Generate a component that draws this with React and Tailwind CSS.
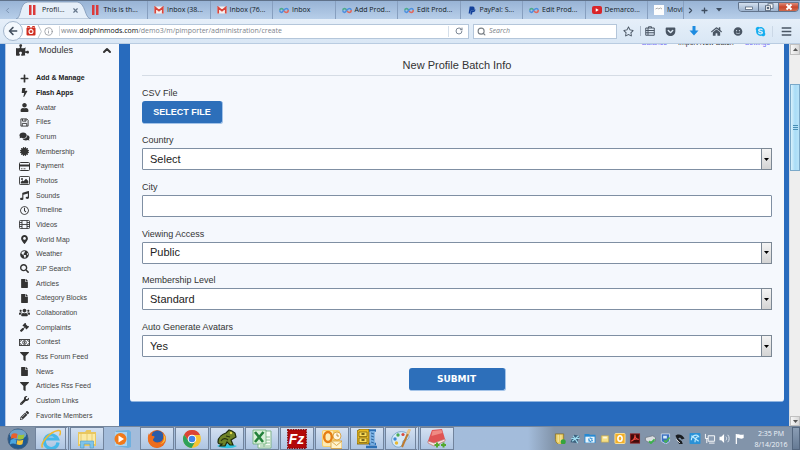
import React, { useState } from "react";
import {
  FaPuzzlePiece, FaPlus, FaBolt, FaUser, FaComments, FaCertificate,
  FaMusic, FaRegClock, FaMapMarkerAlt, FaGlobeAmericas, FaSearch, FaFile,
  FaUsers, FaGavel, FaFilter, FaWrench, FaPencilAlt, FaPaypal, FaSkype,
  FaHome, FaArrowLeft, FaGetPocket, FaRegStar, FaSmile, FaBars,
} from "react-icons/fa";
import { ChevronLeft, ChevronRight, ChevronUp, Info, RotateCw, Search, X } from "lucide-react";

/* ---------- module icons ---------- */

function DiskIcon({ className }) {
  return (
    <svg viewBox="0 0 20 20" className={className} fill="none" stroke="currentColor" strokeWidth="2">
      <path d="M2 2h13l3 3v13H2z" />
      <path d="M5.500 2v5h8V2M5 18v-6h10v6" />
      <path d="M11 3v3" />
    </svg>
  );
}

function CardIcon({ className }) {
  return (
    <svg viewBox="0 0 22 18" className={className}>
      <rect x="1" y="1" width="20" height="16" rx="2" fill="none" stroke="currentColor" strokeWidth="2" />
      <path d="M1 5h20v4H1z" fill="currentColor" />
      <path d="M4 13.500h3M9 13.500h4" stroke="currentColor" strokeWidth="1.600" />
    </svg>
  );
}

function PictureIcon({ className }) {
  return (
    <svg viewBox="0 0 22 18" className={className}>
      <rect x="1" y="1" width="20" height="16" rx="1.500" fill="none" stroke="currentColor" strokeWidth="1.800" />
      <circle cx="6" cy="6" r="2" fill="currentColor" />
      <path d="M3.500 15v-3L7 8.500l2 2L14 5.500l4.500 4.500v5z" fill="currentColor" />
    </svg>
  );
}

function FilmIcon({ className }) {
  return (
    <svg viewBox="0 0 22 18" className={className} fill="none" stroke="currentColor" strokeWidth="1.700">
      <rect x="1" y="1" width="20" height="16" rx="1.500" />
      <path d="M6 1v16M16 1v16M6 9h10M1 5h5M1 9h5M1 13h5M16 5h5M16 9h5M16 13h5" />
    </svg>
  );
}

function MoneyIcon({ className }) {
  return (
    <svg viewBox="0 0 22 16" className={className} fill="none" stroke="currentColor" strokeWidth="1.800">
      <rect x="1" y="2" width="20" height="12" />
      <ellipse cx="11" cy="8" rx="3.500" ry="4" />
      <path d="M11 5.500v5M2 5.500h1.500L5 3M20 5.500h-1.500L17 3M2 10.500h1.500L5 13M20 10.500h-1.500L17 13" />
    </svg>
  );
}

const MODULES = [
  { label: "Add & Manage", icon: FaPlus, bold: true },
  { label: "Flash Apps", icon: FaBolt, bold: true },
  { label: "Avatar", icon: FaUser },
  { label: "Files", icon: DiskIcon },
  { label: "Forum", icon: FaComments },
  { label: "Membership", icon: FaCertificate },
  { label: "Payment", icon: CardIcon },
  { label: "Photos", icon: PictureIcon },
  { label: "Sounds", icon: FaMusic },
  { label: "Timeline", icon: FaRegClock },
  { label: "Videos", icon: FilmIcon },
  { label: "World Map", icon: FaMapMarkerAlt },
  { label: "Weather", icon: FaGlobeAmericas },
  { label: "ZIP Search", icon: FaSearch },
  { label: "Articles", icon: FaFile },
  { label: "Category Blocks", icon: FaFile },
  { label: "Collaboration", icon: FaUsers },
  { label: "Complaints", icon: FaGavel },
  { label: "Contest", icon: MoneyIcon },
  { label: "Rss Forum Feed", icon: FaFilter },
  { label: "News", icon: FaFile },
  { label: "Articles Rss Feed", icon: FaFilter },
  { label: "Custom Links", icon: FaWrench },
  { label: "Favorite Members", icon: FaPencilAlt },
];

/* ---------- favicons ---------- */

function BarsIcon() {
  return (
    <svg viewBox="0 0 10 10" className="h-[10px] w-[10px] shrink-0">
      <rect x="1" y="0" width="2.500" height="10" fill="#dc3a3a" />
      <rect x="5" y="0" width="2.500" height="10" fill="#dc3a3a" />
    </svg>
  );
}

function MailIcon() {
  return (
    <svg viewBox="0 0 20 16" className="h-[8px] w-[10px] shrink-0">
      <rect x="1" y="1" width="18" height="14" rx="1" fill="#f7f0ef" />
      <path d="M2.500 15V3l7.500 6.500L17.500 3v12" fill="none" stroke="#d9453b" strokeWidth="3.400" />
    </svg>
  );
}

function LoopIcon() {
  return (
    <svg viewBox="0 0 20 12" className="h-[7px] w-[10px] shrink-0" fill="none" strokeWidth="3">
      <path d="M10 6C8 3 7 2 5 2a4 4 0 0 0-3.500 4" stroke="#4cab8c" />
      <path d="M1.500 6A4 4 0 0 0 5 10c3 0 5-8 9.500-8A4 4 0 0 1 18.500 5" stroke="#4b8fe0" />
      <path d="M18.500 5c0 3-1.500 5-4 5-2 0-3-1-4-3" stroke="#e2685c" />
    </svg>
  );
}

function PlayIcon() {
  return (
    <svg viewBox="0 0 20 16" className="h-[8px] w-[10px] shrink-0">
      <rect width="20" height="16" rx="4" fill="#d9252a" />
      <path d="M7.500 4.500v7l6-3.500z" fill="#fff" />
    </svg>
  );
}

function PageIcon() {
  return (
    <svg viewBox="0 0 10 10" className="h-[10px] w-[10px] shrink-0">
      <rect width="10" height="10" fill="#fdfdfd" />
      <path d="M1.500 4l2-1 1 1 2-1 1.500 1" stroke="#999" strokeWidth=".8" fill="none" />
    </svg>
  );
}

const TABS = [
  { title: "This is th...", icon: <BarsIcon /> },
  { title: "Inbox (38...", icon: <MailIcon /> },
  { title: "Inbox (76...", icon: <MailIcon /> },
  { title: "Inbox", icon: <LoopIcon /> },
  { title: "Add Prod...", icon: <LoopIcon /> },
  { title: "Edit Prod...", icon: <LoopIcon /> },
  { title: "PayPal: S...", icon: <FaPaypal className="h-[9px] w-[10px] shrink-0 text-[#14419a]" /> },
  { title: "Edit Prod...", icon: <LoopIcon /> },
  { title: "Demarco...", icon: <PlayIcon /> },
];

function TabStrip() {
  return (
    <div className="flex h-[19px] items-stretch border-t border-[#5f7189] bg-linear-to-b from-[#98b3d5] to-[#b7cee9] font-['Open_Sans',sans-serif] text-[7px] text-[#111a26]">
      <button type="button" aria-label="Scroll tabs left" className="flex w-[22px] items-center pl-[3px] text-[#6d84a3]">
        <ChevronLeft className="h-[9px] w-[9px]" />
      </button>
      <div className="grid min-w-0 flex-1 grid-cols-10">
        <div className="relative flex items-center pl-1.5">
          <svg viewBox="0 0 76 18" preserveAspectRatio="none" className="absolute -left-[6px] top-0 h-[18px] w-[75px]">
            <path d="M0 18C6 17 3 2 12 1H62C71 2 69 17 76 18z" fill="#e6eff9" stroke="#7f97b6" strokeWidth=".8" />
          </svg>
          <div className="relative flex flex-1 items-center gap-1">
            <BarsIcon />
            <span>Profil...</span>
          </div>
          <button type="button" aria-label="Close tab" className="relative mr-1.5 text-[#66778c]">
            <X className="h-[7px] w-[7px]" strokeWidth={4} />
          </button>
        </div>
        {TABS.map((tab, i) => (
          <div key={i} className={`flex items-center ${i > 0 ? "border-l border-[#879fbf]" : ""}`}>
            <div className="flex items-center gap-[3px] whitespace-nowrap pl-1.5">
              {tab.icon}
              <span>{tab.title}</span>
            </div>
          </div>
        ))}
      </div>
      <div className="flex w-[37px] items-center gap-[3px] border-x border-[#879fbf] pl-1.5">
        <PageIcon />
        <span>Movi</span>
      </div>
      <div className="flex w-[54px] items-center gap-1.5 pl-0.5 text-[#3e4d60]">
        <button type="button" aria-label="Scroll tabs right"><ChevronRight className="h-[9px] w-[9px]" strokeWidth={3} /></button>
        <button type="button" aria-label="New tab"><FaPlus className="h-[7px] w-[7px]" /></button>
        <button type="button" aria-label="List all tabs" className="pl-0.5">
          <svg viewBox="0 0 6 4" className="h-[4px] w-[6px]"><path d="M0 0h6L3 3.500z" fill="currentColor" /></svg>
        </button>
      </div>
      <WindowButtons />
    </div>
  );
}

function WindowButtons() {
  return (
    <div className="mt-px mr-px flex h-[10px] w-[61px] overflow-hidden rounded-b-sm border border-[#62748c]">
      <button type="button" aria-label="Minimize" className="flex flex-1 items-center justify-center border-r border-[#62748c] bg-linear-to-b from-[#d3dfee] to-[#9db3ce]">
        <svg viewBox="0 0 10 8" className="h-[8px] w-[10px]"><rect x="1.500" y="4" width="7" height="2.500" fill="#fff" stroke="#46566b" strokeWidth=".7" /></svg>
      </button>
      <button type="button" aria-label="Restore" className="flex flex-1 items-center justify-center border-r border-[#62748c] bg-linear-to-b from-[#d3dfee] to-[#9db3ce]">
        <svg viewBox="0 0 10 8" className="h-[8px] w-[10px]" fill="#fff" stroke="#46566b" strokeWidth=".8">
          <rect x="4" y=".8" width="5" height="4.500" />
          <rect x="1.500" y="2.800" width="5" height="4.500" />
          <rect x="3.200" y="4.500" width="1.600" height="1.200" />
        </svg>
      </button>
      <button type="button" aria-label="Close" className="flex flex-1 items-center justify-center bg-linear-to-b from-[#dc8a78] via-[#c8452c] to-[#cf6a4c]">
        <svg viewBox="0 0 10 8" className="h-[8px] w-[10px]"><path d="M2.500 1.500l5 5M7.500 1.500l-5 5" stroke="#fff" strokeWidth="1.900" /></svg>
      </button>
    </div>
  );
}

function NavBar() {
  return (
    <div className="flex h-[25px] items-center border-b border-[#b9cce1] bg-linear-to-b from-[#e6eff9] to-[#d9e7f5] pr-2 font-['Open_Sans',sans-serif] text-[7px]">
      <button type="button" aria-label="Back" className="z-10 ml-[3px] flex h-[20px] w-[20px] items-center justify-center rounded-full border border-[#a3b6cc] bg-[#f3f8fd] text-[#434f5e]">
        <FaArrowLeft className="h-[10px] w-[10px]" />
      </button>
      <div className="-ml-1.5 flex h-[15px] min-w-0 flex-1 items-center border border-[#b4c6da] bg-white pl-2">
        <svg viewBox="0 0 20 20" className="h-[10px] w-[10px] shrink-0">
          <rect x="1" y="3" width="18" height="16" rx="2" fill="#cf2d1f" />
          <path d="M3 3V1h4v2M13 3V1h4v2" stroke="#cf2d1f" strokeWidth="2" fill="none" />
          <circle cx="10" cy="11" r="4" fill="none" stroke="#fff" strokeWidth="2.200" />
          <path d="M10 5v4" stroke="#fff" strokeWidth="2" />
        </svg>
        <svg viewBox="0 0 5 14" className="ml-px h-[13px] w-[5px] shrink-0"><path d="M1 0l3.500 7L1 14" fill="none" stroke="#b9bfc7" /></svg>
        <Info className="ml-0.5 h-[9px] w-[9px] shrink-0 text-[#8b8f95]" />
        <span className="mr-px ml-1.5 h-[10px] w-px bg-[#d5dae0]" />
        <div role="textbox" aria-label="Address" className="min-w-0 flex-1 whitespace-nowrap text-[#7d838b]">
          www.<span className="text-[#0c0e11]">dolphinmods.com</span>/demo3/m/pimporter/administration/create
        </div>
        <button type="button" aria-label="Reload" className="flex h-[11px] w-[20px] items-center justify-center border-l border-[#d5dfea] text-[#7d8896]">
          <RotateCw className="h-[8px] w-[8px]" strokeWidth={3} />
        </button>
      </div>
      <label className="ml-1 flex h-[15px] w-[144px] items-center gap-[3px] border border-[#b4c6da] bg-white pl-[3px] text-[#7a8086]">
        <Search className="h-[9px] w-[9px] shrink-0" strokeWidth={3} />
        <input type="search" aria-label="Search" placeholder="Search" className="w-full min-w-0 bg-transparent italic outline-none placeholder:text-[#7a8086]" />
      </label>
      <div className="flex items-center text-[#4a5664]">
        <button type="button" aria-label="Bookmark" className="flex w-[23px] justify-center"><FaRegStar className="h-[11px] w-[11px]" /></button>
        <button type="button" aria-label="Bookmarks list" className="flex w-[19px] justify-end border-l border-[#aab7c6] pr-1">
          <svg viewBox="0 0 20 20" className="h-[10px] w-[10px]" fill="none" stroke="currentColor" strokeWidth="2">
            <path d="M1.500 4h17v14.500h-17zM7 4V1.500h6V4M1.500 9h17M1.500 13.500h17M6 4v14" />
          </svg>
        </button>
        <button type="button" aria-label="Pocket" className="flex w-[23px] justify-center"><FaGetPocket className="h-[11px] w-[11px]" /></button>
        <button type="button" aria-label="Downloads" className="flex w-[23px] justify-center text-[#1d8be0]">
          <svg viewBox="0 0 20 20" className="h-[10px] w-[10px]"><path d="M7 0h6v9h6l-9 10L1 9h6z" fill="currentColor" /></svg>
        </button>
        <button type="button" aria-label="Home" className="flex w-[22px] justify-center"><FaHome className="h-[11px] w-[11px]" /></button>
        <button type="button" aria-label="Chat" className="flex w-[22px] justify-center"><FaSmile className="h-[9px] w-[10px]" /></button>
        <button type="button" aria-label="Skype" className="flex w-[23px] justify-center text-[#14aef0]"><FaSkype className="h-[11px] w-[11px]" /></button>
        <button type="button" aria-label="Menu" className="flex w-[20px] justify-end border-l border-[#cbd8e6]"><FaBars className="h-[11px] w-[11px]" /></button>
      </div>
    </div>
  );
}

function Sidebar() {
  return (
    <aside className="flex w-[114px] shrink-0 flex-col border-l border-[#b7c9e6] bg-[#f5f8fd] pb-[3px] text-[#333]">
      <button type="button" className="flex h-[27px] items-start pl-[10px] text-left text-[9px] leading-[12px]">
        <FaPuzzlePiece className="h-[12px] w-[13px]" />
        <span className="ml-2.5 flex-1">Modules</span>
        <ChevronUp className="mr-1.5 h-[13px] w-[12px]" strokeWidth={4} />
      </button>
      <nav className="grid flex-1 auto-rows-fr">
        {MODULES.map(({ label, icon: Icon, bold }) => (
          <a key={label} href="#" className={`flex items-center pl-[13px] text-[7px] leading-[10px] ${bold ? "font-bold text-[#222]" : "text-[#444]"}`}>
            <span className="flex w-[17px]"><Icon className="h-[9px] w-[11px] text-[#333]" /></span>
            {label}
          </a>
        ))}
      </nav>
    </aside>
  );
}

function SelectField({ id, label, options }) {
  const [value, setValue] = useState(options[0]);
  return (
    <div>
      <label htmlFor={id} className="block h-[14px] text-[9px] leading-[12px]">{label}</label>
      <div className="relative">
        <select
          id={id}
          value={value}
          onChange={(e) => setValue(e.target.value)}
          className="block h-[22px] w-full appearance-none rounded-[1px] border border-[#7f8fa3] bg-white px-[7px] text-[11px] text-[#222] outline-none"
        >
          {options.map((o) => <option key={o}>{o}</option>)}
        </select>
        <span className="pointer-events-none absolute inset-y-0 right-0 flex w-[11px] items-center justify-center border border-[#7b8794] bg-linear-to-b from-[#f4f4f4] to-[#d4d4d4]">
          <svg viewBox="0 0 5 3" className="h-[3px] w-[5px]"><path d="M0 0h5L2.500 3z" fill="#000" /></svg>
        </span>
      </div>
    </div>
  );
}

function BatchForm() {
  const [city, setCity] = useState("");
  return (
    <main className="mb-6 flex min-w-0 flex-1 flex-col rounded-b-[3px] border-b border-[#8fb4e0] bg-[#f5f8fd] px-3 pb-[10px] text-[#333]">
      <div className="-mt-[6px] flex h-[10px] justify-end gap-[11px] pr-0.5 text-[7px] leading-[10px]">
        <a href="#" className="text-[#6f6ff5]">Balance</a>
        <a href="#" className="text-[#333]">Import New Batch</a>
        <a href="#" className="text-[#6f6ff5]">Settings</a>
      </div>
      <h1 className="mt-[10px] h-[18px] border-b border-[#d5dce5] text-center text-[11px] leading-[14px]">New Profile Batch Info</h1>
      <form className="flex flex-1 flex-col" onSubmit={(e) => e.preventDefault()}>
        <div className="mt-[11px]">
          <label htmlFor="csv" className="block h-[14px] text-[9px] leading-[12px]">CSV File</label>
          <button id="csv" type="button" className="block h-[23px] w-[81px] rounded-[3px] border-r border-b border-[#a3c3e8] bg-[#2d6fba] pt-0.5 text-[9px] font-bold text-white">
            SELECT FILE
          </button>
        </div>
        <div className="mt-[10px] flex flex-1 flex-col justify-between">
          <SelectField id="country" label="Country" options={["Select"]} />
          <div>
            <label htmlFor="city" className="block h-[14px] text-[9px] leading-[12px]">City</label>
            <input id="city" type="text" value={city} onChange={(e) => setCity(e.target.value)}
              className="block h-[22px] w-full rounded-[1px] border border-[#7f8fa3] bg-white px-[7px] text-[11px] outline-none" />
          </div>
          <SelectField id="access" label="Viewing Access" options={["Public", "Private"]} />
          <SelectField id="level" label="Membership Level" options={["Standard"]} />
          <SelectField id="avatars" label="Auto Generate Avatars" options={["Yes", "No"]} />
        </div>
        <button type="submit" className="mx-auto mt-[11px] h-[23px] w-[97px] rounded-[3px] border-r border-b border-[#a3c3e8] bg-[#2d6fba] pt-0.5 font-['DejaVu_Sans',sans-serif] text-[9px] font-bold text-white">
          SUBMIT
        </button>
      </form>
    </main>
  );
}

function Scrollbar() {
  return (
    <div className="flex w-[11px] shrink-0 flex-col border-l border-[#d9dde2] bg-[#eeeeee]">
      <div className="flex h-[11px] items-center justify-center border border-[#c0c0c0] bg-linear-to-r from-[#f6f6f6] to-[#d8d8d8]">
        <svg viewBox="0 0 5 3" className="h-[3px] w-[5px]"><path d="M0 3h5L2.500 0z" fill="#555" /></svg>
      </div>
      <div className="flex flex-1 flex-col pt-[29px]">
        <div className="flex h-[87px] flex-col items-center justify-center gap-px border border-[#7ba9c9] bg-linear-to-r from-[#d9f1fc] via-[#a9dcf7] to-[#b9e3f8]">
          <span className="h-px w-[5px] bg-[#4a8fb5]" />
          <span className="h-px w-[5px] bg-[#4a8fb5]" />
          <span className="h-px w-[5px] bg-[#4a8fb5]" />
        </div>
      </div>
      <div className="flex h-[10px] items-center justify-center border border-[#c0c0c0] bg-linear-to-r from-[#f6f6f6] to-[#d8d8d8]">
        <svg viewBox="0 0 5 3" className="h-[3px] w-[5px]"><path d="M0 0h5L2.500 3z" fill="#555" /></svg>
      </div>
    </div>
  );
}

/* ---------- taskbar ---------- */

const APPS = [
  {
    name: "Internet Explorer", kind: "stack",
    art: (
      <>
        <path d="M17 13.500A6.800 6.800 0 1 1 16.500 10H5" fill="none" stroke="#45b8ea" strokeWidth="3.200" />
        <path d="M1.500 18.500C-1 15 8 3 17 1.500c3-.5 3 2 1.500 5" fill="none" stroke="#f0b92f" strokeWidth="1.500" />
      </>
    ),
  },
  {
    name: "Explorer", kind: "open",
    art: (
      <>
        <path d="M1 3h7l1.500-2H14v2h5v14H1z" fill="#e9c75f" />
        <path d="M2 5h16v10H2z" fill="#fbeaa4" />
        <path d="M4 3v11M10 2v12M15 4v10" stroke="#e4c562" strokeWidth=".8" />
        <path d="M3.500 19v-7h13v7h-3.500v-4H7v4z" fill="#7fc4ea" stroke="#4a9bcb" strokeWidth=".6" />
      </>
    ),
  },
  {
    name: "Media Player", kind: "flat",
    art: (
      <>
        <path d="M4 2l13-1 2 2v15l-3 1-12-2z" fill="#6fb0df" />
        <path d="M3 3h12v14H3z" fill="#aad4f1" />
        <circle cx="8.500" cy="10" r="6" fill="#f27a1a" />
        <path d="M6.500 6.500v7l5.500-3.500z" fill="#fff" />
      </>
    ),
  },
  {
    name: "Firefox", kind: "open",
    art: (
      <>
        <circle cx="10" cy="10" r="9" fill="#e4641c" />
        <circle cx="10.500" cy="7.500" r="6" fill="#2a5ca8" />
        <path d="M2 4c0 2 1 2.500 4 3 1.500 0 2 1 1 2-2 1.500-1 5 3 5 5 0 7-3 6-8 3 4 2 12-6 12.500C2 19-1 10 2 4z" fill="#ee6d1d" />
        <path d="M16 5c2 4 1 8-3 10 6-1 7-7 3-10z" fill="#f8c33a" />
      </>
    ),
  },
  {
    name: "Chrome", kind: "open",
    art: (
      <>
        <circle cx="10" cy="10" r="9" fill="#f5c433" />
        <path d="M2.200 5.500A9 9 0 0 1 18 6h-8a4 4 0 0 0-3.600 6z" fill="#db4437" />
        <path d="M2.200 5.500A9 9 0 0 0 9.500 19l4-7A4 4 0 0 1 6.500 12z" fill="#2ea15a" />
        <circle cx="10" cy="10" r="4.300" fill="#fff" />
        <circle cx="10" cy="10" r="3.300" fill="#4183ea" />
      </>
    ),
  },
  {
    name: "Frog", kind: "open",
    art: (
      <>
        <path d="M0 17c5-3 14-2 20 0-5 3-14 3-20 0z" fill="#2fc3df" />
        <path d="M1 13C1 8 6 5 9 4l3-3 3 1 3 2 1 4-5 3 2 5h-3l-3-3-2 4H3l2-2c-2 0-4 0-4-2z" fill="#6f8428" stroke="#1e2a0c" strokeWidth="1.200" />
        <path d="M4 12c2-3 5-3 7-1M9 7l4 1" stroke="#283410" fill="none" strokeWidth="1.100" />
        <circle cx="14" cy="4" r="1.200" fill="#e3d94a" />
      </>
    ),
  },
  {
    name: "Excel", kind: "open",
    art: (
      <>
        <path d="M6 2h13v17H6z" fill="#f4faf3" stroke="#7eb489" />
        <path d="M8 8h10M8 11h10M8 14h10M8 17h10M12 7v11" stroke="#80b98c" strokeWidth=".9" />
        <path d="M1 1h13v14H1z" fill="#d8efd9" stroke="#4a9a59" strokeWidth=".6" />
        <path d="M3 3l8 10M11.500 3l-8.500 10" stroke="#24813a" strokeWidth="2.600" />
      </>
    ),
  },
  {
    name: "FileZilla", kind: "open",
    art: (
      <>
        <rect x=".8" y=".8" width="18.400" height="18.400" fill="#b30909" stroke="#8d0a0a" strokeWidth="1.400" strokeDasharray="1.500 1" />
        <text x="9.500" y="15" fontFamily="Liberation Sans, sans-serif" fontSize="14" fontWeight="bold" fontStyle="italic" textAnchor="middle" fill="#fff">Fz</text>
      </>
    ),
  },
  {
    name: "Outlook", kind: "open",
    art: (
      <>
        <rect x="0" y="1" width="18" height="17" rx="2" fill="#f8cf6a" />
        <rect x="1" y="2" width="10" height="15" rx="1" fill="#fdebb5" />
        <ellipse cx="6" cy="8" rx="3.800" ry="5" fill="none" stroke="#e57e14" strokeWidth="2.500" />
        <circle cx="15" cy="7" r="4" fill="#fff6df" stroke="#d59628" strokeWidth=".8" />
        <path d="M15 4.500V7h2" stroke="#b2761a" strokeWidth=".8" fill="none" />
        <path d="M9 12h11v7.500H9z" fill="#fff3cb" stroke="#d69a32" strokeWidth=".8" />
        <path d="M9 12l5.500 4.500L20 12" fill="none" stroke="#d69a32" strokeWidth=".8" />
      </>
    ),
  },
  {
    name: "WinZip", kind: "open",
    art: (
      <>
        <path d="M0 2l3-2h9v15H0z" fill="#e9b920" stroke="#6c5306" strokeWidth=".8" />
        <path d="M2 3h8v4.500H2zM2 9h8v4.500H2z" fill="#fbdc59" stroke="#7e6411" strokeWidth=".8" />
        <path d="M4.500 5h3M4.500 11h3" stroke="#4f3f08" strokeWidth="1.400" />
        <path d="M12 1.500h7M9 18h11M12 15h7" stroke="#2c6fb4" strokeWidth="2.600" />
        <path d="M15.500 2v14" stroke="#76aee2" strokeWidth="4.500" />
        <path d="M14 4l3 1M14 7l3 1M14 10l3 1M14 13l3 1" stroke="#24598f" strokeWidth=".8" />
      </>
    ),
  },
  {
    name: "Paint", kind: "stack",
    art: (
      <>
        <path d="M1 13C-1 7 6 1 13 3c7 2 6 8 1 8-3 0-2 3-3 5-2 4-9 2-10-3z" fill="#d6eaf8" stroke="#6c9cc4" strokeWidth=".8" />
        <circle cx="4" cy="10" r="1.700" fill="#3f86d1" /><circle cx="7" cy="6" r="1.700" fill="#4aaa50" />
        <circle cx="12" cy="5.500" r="1.600" fill="#d94b40" /><circle cx="5.500" cy="14" r="1.700" fill="#e8b833" />
        <path d="M18.500 1L11 18" stroke="#bd7b31" strokeWidth="2" /><path d="M18.700 0l-2.200 5" stroke="#e8c58c" strokeWidth="2.800" />
      </>
    ),
  },
  {
    name: "Notes", kind: "open",
    art: (
      <>
        <path d="M5 1l10-1 3 10-11 4-6-2z" fill="#df5555" />
        <path d="M1 12l6 2 11-4v2L7 17l-6-3z" fill="#f6e6e3" stroke="#bd5f5c" strokeWidth=".6" />
        <path d="M5.500 2l9-1 1 3-11 3z" fill="#ef8b84" />
        <path d="M10 13.500v5M7.500 16h5M16.500 13.500v5M14 16h5" stroke="#52a82d" strokeWidth="2" />
      </>
    ),
  },
];

const TRAY = [
  { name: "Security", art: <><path d="M1 1h9v6c0 3-2 5-4.500 6C3 12 1 10 1 7z" fill="#e7cb62" stroke="#836b21" strokeWidth=".8" /><path d="M4 2v8M7 2v8" stroke="#f9edb9" /><circle cx="9.500" cy="9.500" r="2.800" fill="#35a43b" /></> },
  { name: "Sync", art: <><path d="M1 10l4-8 6 1-3 8z" fill="#3b617e" /><path d="M2 6h9M4 3l5 8M3 9l7-6" stroke="#9fdcf0" strokeWidth="1.300" /></> },
  { name: "Settings folder", art: <><path d="M0 1h5l1 1h6v9H0z" fill="#2589d3" /><rect x="1" y="4" width="10" height="6.500" fill="#e9f5fc" /><circle cx="6.500" cy="7.500" r="1.800" fill="none" stroke="#2589d3" strokeWidth="1.700" strokeDasharray="1.200 .5" /></> },
  { name: "Notes", art: <><path d="M2 3h8v7H2z" fill="#f5df86" stroke="#c1a64e" strokeWidth=".7" /><path d="M4 5h4" stroke="#fff9df" strokeWidth="2" /></> },
  { name: "Outlook", art: <><rect x=".5" y=".5" width="11" height="11" rx="1" fill="#f2af29" stroke="#ffe49a" /><ellipse cx="6" cy="6" rx="2.300" ry="3" fill="none" stroke="#fff" strokeWidth="1.700" /></> },
  { name: "PDF", art: <><rect x="1" y="1" width="10" height="10" fill="#410b0c" stroke="#8d1b1b" /><path d="M2 9c3-1 4-4 4-7 0 3 1 5 4 5-3-1-6 0-8 2z" fill="none" stroke="#ef4a41" strokeWidth="1.200" /></> },
  { name: "Device", art: <><path d="M1 5l8-2 3 2v4l-8 1-3-2z" fill="#d9dde1" stroke="#69737d" strokeWidth=".8" /><path d="M5 9l2 2 4-4" stroke="#3bb34b" strokeWidth="2" fill="none" /></> },
  { name: "Network", art: <><path d="M2 1h9v8l-4 3-5-3z" fill="#3b70bf" stroke="#dce9fa" strokeWidth=".8" /><path d="M4 3h4v3H4z" fill="#d3edfb" /><path d="M5 8l2 2 4-5" stroke="#4cb74a" strokeWidth="1.700" fill="none" /></> },
  { name: "Phone", art: <><path d="M1 3c3-3 8-1 10 3l-3 1-2-2-2 1 4 3 1 3H5L3 7z" fill="#191c20" /><path d="M2 7l4 4" stroke="#eee" strokeWidth="1" /></> },
  { name: "Monitor", art: <><rect x="0" y="0" width="12" height="12" rx="1" fill="#2b91d6" /><path d="M2 8c0-6 7-7 8-4-3 0-4 2-4 6M2 3l8 6" stroke="#bceafe" strokeWidth="1.300" fill="none" /></> },
  { name: "Connection", art: <><path d="M4 3h7v6H4z" fill="#8b9cb1" stroke="#fff" /><path d="M5 11h6M1 1v5h3M2.500 6v5" stroke="#fff" fill="none" /></> },
  { name: "Volume", art: <><path d="M0 4h2l3-3v10L2 8H0z" fill="#fff" /><path d="M7 4c1 1 1 3 0 4M9 2c2 2 2 6 0 8" stroke="#e4ebf3" fill="none" /></> },
  { name: "Action center", art: <><path d="M2 1v11" stroke="#fff" strokeWidth="1.300" /><path d="M2 1.500c3-1 4 1.500 8 0v4c-4 2-5-1-8 0z" fill="#fff" /></> },
];

function AppButton({ app }) {
  const box = app.kind === "flat"
    ? "border-transparent"
    : "border-[#71839c] bg-linear-to-b from-[#d3e0f1] to-[#aec5e2]";
  return (
    <button type="button" aria-label={app.name}
      className={`flex w-[34px] items-center justify-center border ${box} ${app.kind === "stack" ? "border-r-4 border-double" : ""}`}>
      <svg viewBox="0 0 20 20" className="h-[20px] w-[20px]">{app.art}</svg>
    </button>
  );
}

function Taskbar() {
  return (
    <footer className="flex h-6 items-stretch border-t border-[#75869c] bg-[#8294aa]">
      <button type="button" aria-label="Start" className="flex w-[35px] items-center justify-center">
        <svg viewBox="0 0 24 24" className="h-[22px] w-[22px]">
          <circle cx="12" cy="12" r="11" fill="#225a8f" stroke="#415d7d" />
          <ellipse cx="12" cy="7" rx="9" ry="5.500" fill="#6fa2c9" />
          <path d="M5 7c2-1.500 4-1.500 6.500-.5l-1 5c-2-1-4-1-6.500.3z" fill="#e9602c" />
          <path d="M12.500 7c2 1 4 .8 6.500-.3l-1 5c-2 1.200-4 1-6.500.2z" fill="#9cc43b" />
          <path d="M4 13c2-1.200 4-1.200 6.500-.3l-1 5c-2-1-4-1-6.500.3z" fill="#4aa6e0" />
          <path d="M11.300 13c2 1 4 .8 6.500-.2l-1 5c-2 1.200-4 1-6.500 0z" fill="#f6c73b" />
        </svg>
      </button>
      <div className="flex min-w-0 flex-1 items-stretch gap-px bg-linear-to-r from-[#a3bcdb] from-95% to-[#8294aa]">
        {APPS.map((app) => <AppButton key={app.name} app={app} />)}
      </div>
      <div className="flex items-center gap-[3px] pr-1">
        {TRAY.map((t) => (
          <svg key={t.name} role="img" aria-label={t.name} viewBox="0 0 12 12" className="h-[11px] w-[12px]">{t.art}</svg>
        ))}
      </div>
      <div className="flex w-[42px] flex-col justify-center text-center font-['Open_Sans',sans-serif] text-[7px] leading-[11px] text-[#eef3f9]">
        <span>2:35 PM</span>
        <span>8/14/2016</span>
      </div>
      <button type="button" aria-label="Show desktop" className="w-[8px] border border-[#54677f] bg-linear-to-b from-[#8a9db4] to-[#667b95]" />
    </footer>
  );
}

export default function App() {
  return (
    <div className="flex h-screen flex-col overflow-hidden bg-[#286bbd] font-['Liberation_Sans',Arial,sans-serif]">
      <TabStrip />
      <NavBar />
      <div className="flex min-h-0 flex-1">
        <div className="flex min-w-0 flex-1 gap-[11px] overflow-hidden pr-[5px] pl-[5px]">
          <Sidebar />
          <BatchForm />
        </div>
        <Scrollbar />
      </div>
      <Taskbar />
    </div>
  );
}
